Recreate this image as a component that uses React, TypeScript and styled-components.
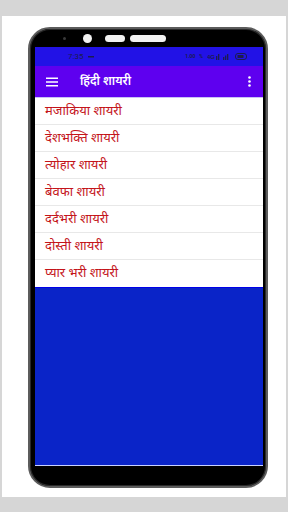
import React from "react";
import styled, { createGlobalStyle } from "styled-components";

const Global = createGlobalStyle`
  html, body { margin: 0; padding: 0; }
  body {
    background: #d6d6d6;
    font-family: "Noto Sans Devanagari", "Noto Sans", "Lohit Devanagari", sans-serif;
    width: 288px;
    height: 512px;
    overflow: hidden;
  }
`;

const Page = styled.div`
  width: 288px;
  height: 512px;
  box-sizing: border-box;
  padding: 16px 2px 15px 2px;
`;

const Card = styled.div`
  background: #ffffff;
  height: 100%;
  box-sizing: border-box;
  padding: 11px 18px 9px 26px;
  display: flex;
`;

const Phone = styled.div`
  flex: 1;
  box-sizing: border-box;
  border: 2px solid #5c5c5c;
  border-radius: 22px;
  background: #000;
  box-shadow: inset 0 0 0 1px #2a2a2a;
  padding: 0 3px 20px 5px;
  display: flex;
  flex-direction: column;
`;

const TopBezel = styled.div`
  height: 18px;
  display: flex;
  align-items: center;
  padding-left: 28px;
  padding-top: 1px;
  box-sizing: border-box;
`;

const Dot = styled.div`
  width: 3px;
  height: 3px;
  border-radius: 50%;
  background: #3a3a3a;
  margin-right: 17px;
`;

const Lens = styled.div`
  width: 9px;
  height: 9px;
  border-radius: 50%;
  background: #f2f2f2;
  margin-right: 13px;
`;

const Pill = styled.div<{ $w: number }>`
  width: ${(p) => p.$w}px;
  height: 7px;
  border-radius: 4px;
  background: #f2f2f2;
  margin-right: 5px;
`;

const Screen = styled.div`
  flex: 1;
  display: flex;
  flex-direction: column;
  background: #0a24c8;
  border-bottom: 1px solid #c8d0ff;
  overflow: hidden;
`;

const StatusBar = styled.div`
  height: 19px;
  background: #2212e6;
  display: flex;
  align-items: center;
  padding: 0 15px 0 33px;
  font-family: "Roboto", "Liberation Sans", sans-serif;
  font-size: 8px;
  color: #1c1c50;
`;

const StatusLeft = styled.div`
  display: flex;
  align-items: center;
  gap: 5px;
  flex: 1;
`;

const StatusRight = styled.div`
  display: flex;
  align-items: center;
  gap: 4px;
`;

const Tiny = styled.span`
  font-size: 5px;
  line-height: 5px;
  font-weight: 700;
`;

const AppBar = styled.div`
  height: 32px;
  background: #5e00ef;
  display: flex;
  align-items: center;
  padding: 0 12px 0 11px;
  border-bottom: 1px solid #c9c2f5;
  box-sizing: border-box;
`;

const Title = styled.div`
  color: #ffffff;
  font-size: 12px;
  font-weight: 600;
  margin-left: 22px;
  flex: 1;
`;

const List = styled.div`
  background: #ffffff;
  display: flex;
  flex-direction: column;
  border-bottom: 1px solid #0000e8;
`;

const Row = styled.div`
  height: 27px;
  box-sizing: border-box;
  display: flex;
  align-items: center;
  padding-left: 10px;
  color: #c4141a;
  font-size: 13px;
  border-bottom: 1px solid #e8e8e8;
  &:last-child { border-bottom: none; }
`;

const items = [
  "मजाकिया शायरी",
  "देशभक्ति शायरी",
  "त्योहार शायरी",
  "बेवफा शायरी",
  "दर्दभरी शायरी",
  "दोस्ती शायरी",
  "प्यार भरी शायरी",
];

const ink = "#1c1c50";

export default function App() {
  return (
    <>
      <Global />
      <Page>
        <Card>
          <Phone>
            <TopBezel>
              <Dot />
              <Lens />
              <Pill $w={20} />
              <Pill $w={36} />
            </TopBezel>
            <Screen>
              <StatusBar>
                <StatusLeft>
                  <span>7:35</span>
                  <svg width="6" height="2"><rect width="6" height="1.5" fill={ink} /></svg>
                </StatusLeft>
                <StatusRight>
                  <Tiny>1.00</Tiny>
                  <Tiny>%</Tiny>
                  <svg width="24" height="7" viewBox="0 0 24 7">
                    <text x="0" y="6" fontSize="6" fill={ink} fontFamily="Liberation Sans" fontWeight="700">4G</text>
                    <rect x="9" y="3" width="1.3" height="4" fill={ink} />
                    <rect x="11" y="1" width="1.3" height="6" fill={ink} />
                    <rect x="16" y="4" width="1.3" height="3" fill={ink} />
                    <rect x="18" y="2.5" width="1.3" height="4.5" fill={ink} />
                    <rect x="20" y="1" width="1.3" height="6" fill={ink} />
                  </svg>
                  <svg width="13" height="7" viewBox="0 0 13 7">
                    <rect x="0.5" y="0.5" width="11" height="6" rx="2.5" fill="none" stroke={ink} strokeWidth="1" />
                    <rect x="2.5" y="2" width="6" height="3" fill={ink} />
                  </svg>
                </StatusRight>
              </StatusBar>
              <AppBar>
                <svg width="12" height="10" viewBox="0 0 12 10">
                  <rect x="0" y="0.5" width="12" height="1.5" fill="#fff" />
                  <rect x="0" y="4.25" width="12" height="1.5" fill="#fff" />
                  <rect x="0" y="8" width="12" height="1.5" fill="#fff" />
                </svg>
                <Title>हिंदी शायरी</Title>
                <svg width="3" height="11" viewBox="0 0 3 11">
                  <circle cx="1.5" cy="1.5" r="1.3" fill="#fff" />
                  <circle cx="1.5" cy="5.5" r="1.3" fill="#fff" />
                  <circle cx="1.5" cy="9.5" r="1.3" fill="#fff" />
                </svg>
              </AppBar>
              <List>
                {items.map((t) => (
                  <Row key={t}>{t}</Row>
                ))}
              </List>
            </Screen>
          </Phone>
        </Card>
      </Page>
    </>
  );
}
